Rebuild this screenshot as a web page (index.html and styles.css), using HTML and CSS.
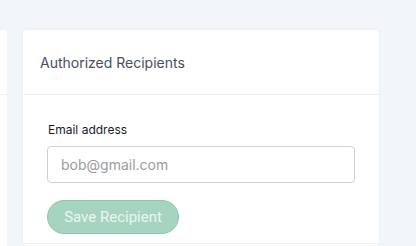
FILE: index.html
```html
<!DOCTYPE html>
<html>
<head>
<meta charset="utf-8">
<link rel="stylesheet" href="styles.css">
</head>
<body>
<div class="layout">
  <div class="side-card">
    <div class="side-head"></div>
  </div>
  <div class="card">
    <div class="card-head">
      <h2 class="card-title">Authorized Recipients</h2>
    </div>
    <div class="card-body">
      <label class="field-label" for="email">Email address</label>
      <input class="field-input" id="email" type="text" placeholder="bob@gmail.com">
      <button class="btn-save" type="button">Save Recipient</button>
    </div>
  </div>
</div>
</body>
</html>
```
FILE: styles.css
```css
html, body {
  margin: 0;
  padding: 0;
  background: #f3f6f9;
  font-family: Inter, "Noto Sans", sans-serif;
}
.layout {
  display: flex;
  gap: 16px;
  padding-top: 30px;
  height: 216px;
  overflow: hidden;
}
.side-card {
  width: 7px;
  background: #fff;
  border-radius: 0 4px 0 0;
}
.side-head {
  height: 64px;
  border-bottom: 1px solid #eef0f3;
}
.card {
  width: 356px;
  background: #fff;
  border-radius: 4px;
  box-shadow: 0 0 3px rgba(200, 210, 220, 0.35);
}
.card-head {
  height: 64px;
  display: flex;
  align-items: center;
  padding-left: 17px;
  border-bottom: 1px solid #eef0f3;
}
.card-title {
  margin: 0;
  font-size: 14px;
  font-weight: 400;
  color: #474e5f;
}
.card-body {
  padding: 27px 24px 9px;
  display: flex;
  flex-direction: column;
  align-items: flex-start;
  border-bottom: 1px solid #eef0f3;
}
.field-label {
  font-size: 12px;
  line-height: 16px;
  font-weight: 400;
  color: #151b2b;
  margin-left: 1px;
  margin-bottom: 8px;
}
.field-input {
  box-sizing: border-box;
  width: 308px;
  height: 37px;
  border: 1px solid #cfd1d4;
  border-radius: 4px;
  padding: 0 13px;
  font-family: Inter, sans-serif;
  font-size: 14px;
  color: #333;
  outline: none;
}
.field-input::placeholder {
  color: #9a9ca0;
}
.btn-save {
  margin-top: 17px;
  box-sizing: border-box;
  width: 132px;
  height: 34px;
  border-radius: 17px;
  border: 1px solid #8fc6ae;
  background: #a6d4c0;
  color: #eaf6f0;
  font-family: Roboto, sans-serif;
  font-size: 15px;
  padding: 0;
}
```
